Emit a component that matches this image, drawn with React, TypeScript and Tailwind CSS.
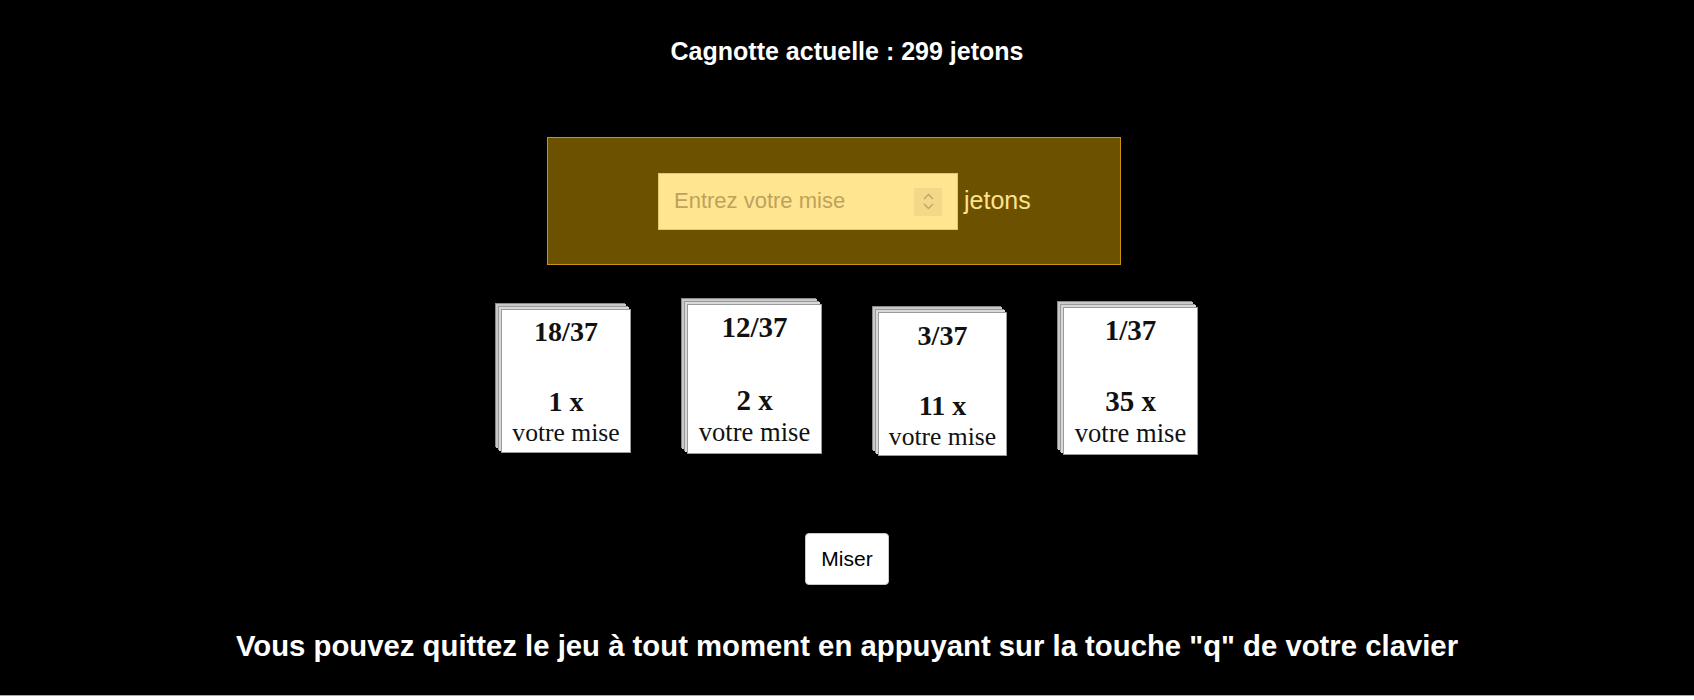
const cards = [
    {
        odds: "18/37",
        gain: "1 x",
        box: "mt-[5px] w-[130px] h-[144px] pt-[6px] pb-[7px]",
        big: "text-[28px] leading-[32px]",
        gap: "mt-[38px]",
        small: "text-[25.6px] leading-[29px]",
    },
    {
        odds: "12/37",
        gain: "2 x",
        box: "mt-0 w-[135px] h-[150px] pt-[6px] pb-[8px]",
        big: "text-[29px] leading-[33px]",
        gap: "mt-[40px]",
        small: "text-[26.6px] leading-[30px]",
    },
    {
        odds: "3/37",
        gain: "11 x",
        box: "mt-[8px] w-[129px] h-[144px] pt-[7px] pb-[6px]",
        big: "text-[28px] leading-[32px]",
        gap: "mt-[38px]",
        small: "text-[25.6px] leading-[29px]",
    },
    {
        odds: "1/37",
        gain: "35 x",
        box: "mt-[3px] w-[135px] h-[148px] pt-[6px] pb-[7px]",
        big: "text-[29px] leading-[33px]",
        gap: "mt-[38px]",
        small: "text-[26.6px] leading-[30px]",
    },
];

function Card({ c }: { c: (typeof cards)[number] }) {
    return (
        <div
            className={`${c.box} flex flex-col items-center bg-white border border-[#9a9a9a] text-[#111] shadow-[-2px_-2px_0_#d8d8d8,-3px_-3px_0_#9a9a9a,-5px_-5px_0_#c8c8c8,-6px_-6px_0_#8a8a8a]`}
            style={{ fontFamily: '"Liberation Serif", "Times New Roman", serif' }}
        >
            <div className={`${c.big} font-bold`}>{c.odds}</div>
            <div className={`${c.big} ${c.gap} font-bold`}>{c.gain}</div>
            <div className={c.small}>votre mise</div>
        </div>
    );
}

export default function App() {
    return (
        <div className="min-h-[700px] bg-white">
            <div
                className="h-[696px] bg-black border-b border-[#a8a8a8] flex flex-col items-center text-white"
                style={{ fontFamily: '"Liberation Sans", Arial, sans-serif' }}
            >
                {/* pot */}
                <h2 className="mt-[37px] text-[25px] leading-[29px] font-bold">Cagnotte actuelle : 299 jetons</h2>

                {/* bet box */}
                <div className="self-start ml-[547px] mt-[71px] w-[574px] h-[128px] bg-[#6b5100] border border-[#c8960c] flex items-center pl-[110px]">
                    <div className="relative w-[300px] h-[57px] bg-[#ffe590] border border-[#e6c66e] flex items-center">
                        <input
                            type="text"
                            placeholder="Entrez votre mise"
                            className="w-full h-full bg-transparent pl-[15px] pr-[48px] text-[22px] text-[#6b5100] placeholder:text-[#bea25c] outline-none"
                        />
                        <div className="absolute right-[15px] top-[14px] w-[28px] h-[28px] bg-[#f2d888] flex flex-col items-center justify-center gap-[3px]">
                            <svg width="11" height="7" viewBox="0 0 11 7" fill="none" stroke="#c2a55e" strokeWidth="1.4">
                                <path d="M1 6 L5.5 1.5 L10 6" />
                            </svg>
                            <svg width="11" height="7" viewBox="0 0 11 7" fill="none" stroke="#c2a55e" strokeWidth="1.4">
                                <path d="M1 1 L5.5 5.5 L10 1" />
                            </svg>
                        </div>
                    </div>
                    <span className="ml-[6px] text-[25px] text-[#ffe38a]">jetons</span>
                </div>

                {/* odds cards */}
                <div className="mt-[39px] pl-[5px] flex items-start gap-[56px]">
                    {cards.map((c) => (
                        <Card key={c.odds} c={c} />
                    ))}
                </div>

                <button className="mt-[77px] w-[84px] h-[52px] bg-white border border-[#c8c8c8] rounded-[4px] text-[21px] text-black">
                    Miser
                </button>

                <p className="mt-[44px] text-[29.3px] leading-[33px] font-bold">
                    Vous pouvez quittez le jeu à tout moment en appuyant sur la touche "q" de votre clavier
                </p>
            </div>
        </div>
    );
}
